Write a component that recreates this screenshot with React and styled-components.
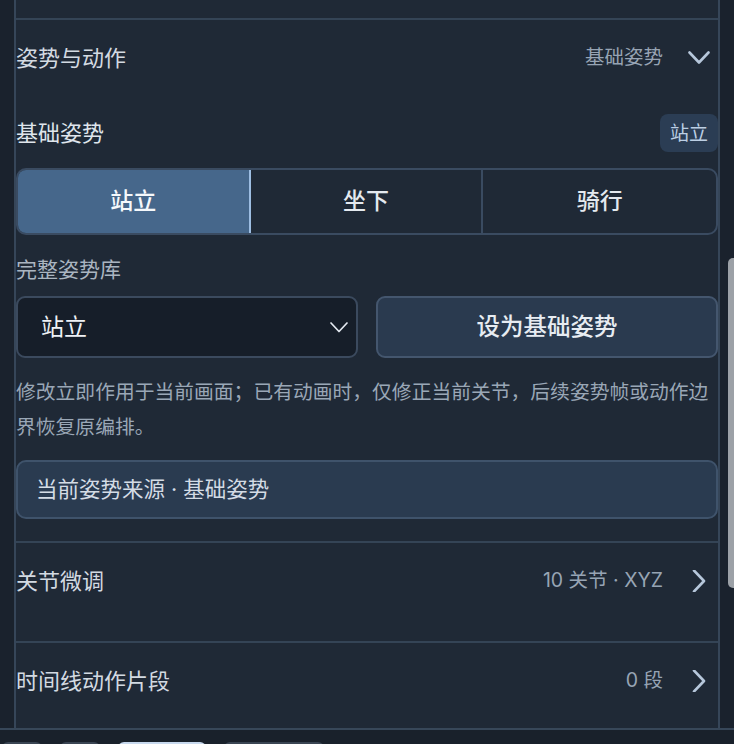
import React from "react";
import styled, { createGlobalStyle } from "styled-components";

const GlobalStyle = createGlobalStyle`
  *, *::before, *::after { box-sizing: border-box; }
  body {
    margin: 0;
    background: #1a222d;
    font-family: Inter, "Noto Sans CJK SC", sans-serif;
    -webkit-font-smoothing: antialiased;
  }
`;

const POSES = ["站立", "坐下", "骑行"];

const SECTIONS = [
  { key: "joints", title: "关节微调", summary: "10 关节 · XYZ" },
  { key: "clips", title: "时间线动作片段", summary: "0 段" },
];

function ChevronDown() {
  return (
    <svg width="22" height="22" viewBox="0 0 22 22" fill="none">
      <path
        d="M1.5 5.5 L11 15.5 L20.5 5.5"
        stroke="#b6c7db"
        strokeWidth="2.6"
        strokeLinecap="round"
        strokeLinejoin="round"
      />
    </svg>
  );
}

function ChevronRight() {
  return (
    <svg width="22" height="22" viewBox="0 0 22 22" fill="none">
      <path
        d="M6 0.5 L16 11 L6 21.5"
        stroke="#b6c7db"
        strokeWidth="2.6"
        strokeLinecap="round"
        strokeLinejoin="round"
      />
    </svg>
  );
}

function SelectArrow() {
  return (
    <svg width="18" height="11" viewBox="0 0 18 11" fill="none">
      <path
        d="M1 1 L9 9.5 L17 1"
        stroke="#e3e9f0"
        strokeWidth="1.7"
        strokeLinecap="round"
        strokeLinejoin="round"
      />
    </svg>
  );
}

export default function App() {
  const active = "站立";

  return (
    <>
      <GlobalStyle />
      <Page>
        <Viewport>
          <Panel>
            <Remnant />

            <Section>
              <Header>
                <Title>姿势与动作</Title>
                <Summary>基础姿势</Summary>
                <IconBox>
                  <ChevronDown />
                </IconBox>
              </Header>

              <Body>
                <LabelRow>
                  <Label>基础姿势</Label>
                  <Tag>{active}</Tag>
                </LabelRow>

                <Segmented>
                  {POSES.map((pose) => (
                    <Segment key={pose} $active={pose === active}>
                      {pose}
                    </Segment>
                  ))}
                </Segmented>

                <SubLabel>完整姿势库</SubLabel>

                <Controls>
                  <Select>
                    <span>站立</span>
                    <SelectArrow />
                  </Select>
                  <Button>设为基础姿势</Button>
                </Controls>

                <Help>
                  修改立即作用于当前画面；已有动画时，仅修正当前关节，后续姿势帧或动作边界恢复原编排。
                </Help>

                <Source>当前姿势来源 · 基础姿势</Source>
              </Body>
            </Section>

            {SECTIONS.map((s) => (
              <Section key={s.key}>
                <Header>
                  <Title>{s.title}</Title>
                  <Summary>{s.summary}</Summary>
                  <IconBox>
                    <ChevronRight />
                  </IconBox>
                </Header>
              </Section>
            ))}
          </Panel>

          <ScrollTrack>
            <Thumb />
          </ScrollTrack>
        </Viewport>

        <TabBar>
          <TabPill $w={40} />
          <TabPill $w={40} />
          <TabPill $w={88} $active />
          <TabPill $w={100} />
        </TabBar>
      </Page>
    </>
  );
}

const Page = styled.div`
  height: 744px;
  display: flex;
  flex-direction: column;
  overflow: hidden;
`;

const Viewport = styled.div`
  flex: 0 0 728px;
  display: flex;
  overflow: hidden;
`;

const Panel = styled.div`
  flex: 0 0 706px;
  margin-left: 14px;
  background: #1f2936;
  border-left: 2px solid #364659;
  border-right: 2px solid #364659;
  overflow: hidden;
  line-height: 1;
`;

const Remnant = styled.div`
  height: 18px;
`;

const Section = styled.section`
  border-top: 2px solid #344456;
  padding-bottom: 22px;
`;

const Header = styled.div`
  height: 76px;
  display: flex;
  align-items: center;
  padding-right: 8px;
`;

const Title = styled.div`
  flex: 1;
  font-size: 22px;
  color: #d3dae2;
`;

const Summary = styled.div`
  font-size: 19.5px;
  color: #97a4b4;
  margin-right: 25px;
`;

const IconBox = styled.div`
  width: 22px;
  height: 22px;
  display: flex;
`;

const Body = styled.div`
  display: flex;
  flex-direction: column;
`;

const LabelRow = styled.div`
  margin-top: 18px;
  height: 38px;
  display: flex;
  align-items: center;
  justify-content: space-between;
`;

const Label = styled.div`
  font-size: 22px;
  color: #dfe5ec;
`;

const Tag = styled.div`
  height: 38px;
  padding: 0 10px;
  display: flex;
  align-items: center;
  border-radius: 8px;
  background: #2b3d54;
  color: #bccfe4;
  font-size: 19px;
`;

const Segmented = styled.div`
  margin-top: 16px;
  height: 67px;
  display: grid;
  grid-template-columns: repeat(3, 1fr);
  border: 2px solid #3a4b61;
  border-radius: 10px;
  overflow: hidden;
`;

const Segment = styled.div`
  display: flex;
  align-items: center;
  justify-content: center;
  font-size: 23px;
  font-weight: 500;
  color: ${({ $active }) => ($active ? "#f5f8fb" : "#e4e9ef")};
  background: ${({ $active }) => ($active ? "#46678b" : "transparent")};
  border-right: 2px solid
    ${({ $active }) => ($active ? "#9dbde2" : "#3a4b61")};

  &:last-child {
    border-right: none;
  }
`;

const SubLabel = styled.div`
  margin-top: 19px;
  height: 30px;
  display: flex;
  align-items: center;
  font-size: 21px;
  color: #aab5c1;
`;

const Controls = styled.div`
  margin-top: 12px;
  height: 62px;
  display: grid;
  grid-template-columns: 1fr 1fr;
  gap: 18px;
`;

const Select = styled.div`
  display: flex;
  align-items: center;
  justify-content: space-between;
  padding: 0 8px 0 23px;
  background: #161e29;
  border: 2px solid #3b4a5e;
  border-radius: 9px;
  font-size: 23px;
  color: #eef2f6;
`;

const Button = styled.div`
  display: flex;
  align-items: center;
  justify-content: center;
  background: #2a3a4f;
  border: 2px solid #44566e;
  border-radius: 9px;
  font-size: 23.5px;
  font-weight: 500;
  color: #e7ecf2;
`;

const Help = styled.p`
  margin: 17px 0 0;
  font-size: 19.8px;
  line-height: 35px;
  color: #9aa7b6;
`;

const Source = styled.div`
  margin-top: 15px;
  height: 59px;
  display: flex;
  align-items: center;
  padding-left: 18px;
  background: #2a3b50;
  border: 2px solid #3f536b;
  border-radius: 10px;
  font-size: 21.5px;
  color: #d4dce5;
`;

const ScrollTrack = styled.div`
  flex: 1;
  padding: 258px 0 0 8px;
`;

const Thumb = styled.div`
  width: 10px;
  height: 330px;
  border-radius: 5px;
  background: #9ca1a7;
`;

const TabBar = styled.div`
  flex: 1;
  display: flex;
  gap: 18px;
  padding: 12px 0 0 2px;
  background: #19212b;
  border-top: 2px solid #374759;
`;

const TabPill = styled.div`
  flex: 0 0 ${({ $w }) => $w}px;
  height: 20px;
  border-radius: 6px;
  background: ${({ $active }) => ($active ? "#c8d9ee" : "#3a4553")};
`;
